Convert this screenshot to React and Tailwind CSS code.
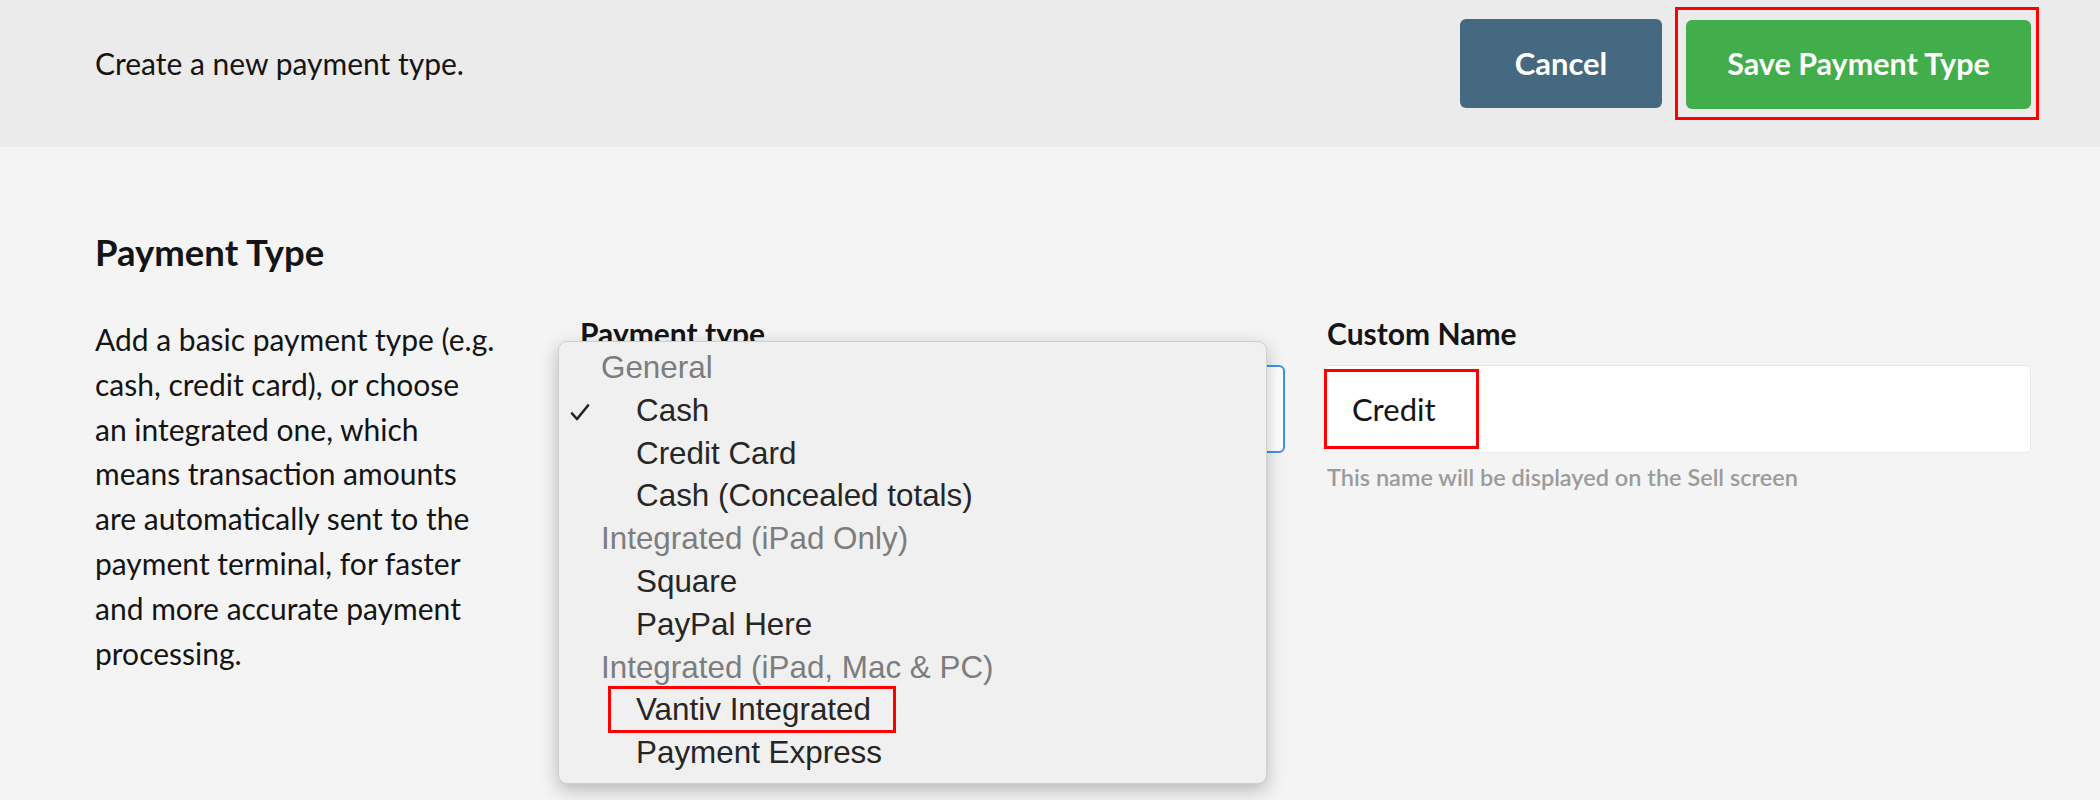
import React from "react";

const groups = [
  { label: "General", items: ["Cash", "Credit Card", "Cash (Concealed totals)"] },
  { label: "Integrated (iPad Only)", items: ["Square", "PayPal Here"] },
  { label: "Integrated (iPad, Mac & PC)", items: ["Vantiv Integrated", "Payment Express"] },
];

const Check = () => (
  <svg width="20" height="17" viewBox="0 0 20 17" className="absolute left-[11px] top-[14px]">
    <path d="M2 9.5 L7 15 L18 1.5" fill="none" stroke="#222" strokeWidth="2.6" strokeLinecap="round" strokeLinejoin="round" />
  </svg>
);

const Popup = () => (
  <div className="absolute left-[-24px] top-[-26px] w-[709px] h-[443px] bg-[#f0f0f0] border border-[#cfcfcf] rounded-[9px] shadow-[0_6px_18px_rgba(0,0,0,0.25)] pt-[5px] font-['Liberation_Sans',Arial,sans-serif] text-[31.4px] z-10">
    {groups.map((g) => (
      <div key={g.label}>
        <div className="h-[42.8px] leading-[42.8px] pl-[42px] text-[#7d7d7d]">{g.label}</div>
        {g.items.map((item) => (
          <div key={item} className="relative h-[42.8px] leading-[42.8px] pl-[77px] text-[#262626]">
            {item === "Cash" && <Check />}
            {item === "Vantiv Integrated" && (
              <div className="absolute left-[49px] top-[-3px] w-[288px] h-[47px] border-[3px] border-[#ff0000]" />
            )}
            {item}
          </div>
        ))}
      </div>
    ))}
  </div>
);

export default function App() {
  return (
    <div className="min-h-screen bg-[#f4f4f4] font-['Lato',sans-serif] text-[#141414]">
      <header className="h-[147px] bg-[#ebebeb] flex items-center justify-between pl-[95px] pr-[61px] pb-[21px]">
        <p className="text-[30px]">Create a new payment type.</p>
        <div className="flex items-center gap-[13px]">
          <button className="w-[202px] h-[89px] rounded-[6px] bg-[#446981] text-white text-[31px] font-bold">
            Cancel
          </button>
          <div className="border-[3px] border-[#ff0000] pl-[8px] pr-[5px] pt-[10px] pb-[8px]">
            <button className="w-[345px] h-[89px] rounded-[6px] bg-[#42ad4b] text-white text-[30.5px] font-bold">
              Save Payment Type
            </button>
          </div>
        </div>
      </header>

      <main className="pl-[95px] pr-[69px] pt-[86px]">
        <h2 className="text-[36.5px] font-bold leading-[38px]">Payment Type</h2>

        <div className="mt-[46px] flex">
          <div className="w-[485px] shrink-0">
            <p className="w-[400px] text-[30px] leading-[44.8px]">
              Add a basic payment type (e.g. cash, credit card), or choose an integrated one, which means transaction
              amounts are automatically sent to the payment terminal, for faster and more accurate payment processing.
            </p>
          </div>

          <div className="w-[705px]">
            <label className="block text-[30px] font-bold leading-[32px]">Payment type</label>
            <div className="relative mt-[16px] h-[88px] bg-white border-2 border-[#3b93e5] rounded-[6px]">
              <Popup />
            </div>
          </div>

          <div className="ml-[39px] flex-1">
            <label className="block text-[30px] font-bold leading-[32px] pl-[3px]">Custom Name</label>
            <div className="relative mt-[16px] h-[88px] bg-white border border-[#e8e8e8] rounded-[5px] flex items-center pl-[27px] text-[31px]">
              <div className="absolute left-[-1px] top-[3px] w-[155px] h-[80px] border-[3px] border-[#ff0000]" />
              Credit
            </div>
            <p className="mt-[12px] pl-[3px] text-[23.5px] leading-[24px] font-semibold text-[#9b9b9b]">
              This name will be displayed on the Sell screen
            </p>
          </div>
        </div>
      </main>
    </div>
  );
}
